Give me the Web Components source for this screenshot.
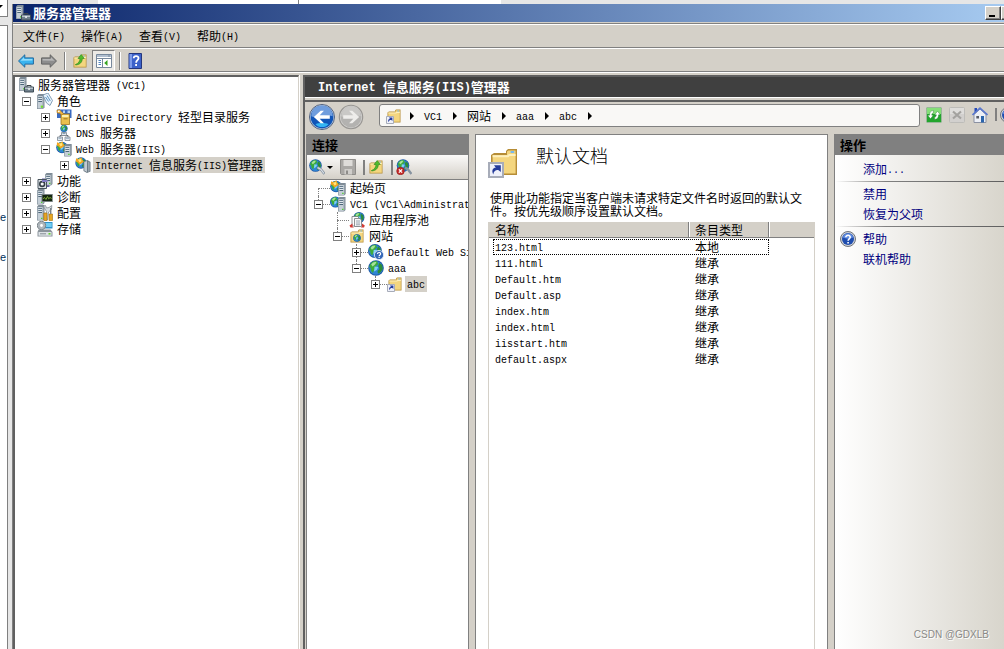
<!DOCTYPE html>
<html lang="zh-CN">
<head>
<meta charset="utf-8">
<title>服务器管理器</title>
<style>
html, body { height: 100%; margin: 0; }
body { overflow: hidden; background: #d4d0c8; color: #000;
  font: 12px/16px "Noto Sans CJK SC", "Noto Sans", sans-serif; }
</style>
</head>
<body>
<manager-desktop></manager-desktop>
<script>
// ASCII runs are set in a half-width monospaced face beside the full-width characters.
const mixed = s => s.replace(/[\x20-\x7e]+/g, m => `<span class="a">${m}</span>`);

const BASE = `
:host { display: block; box-sizing: border-box; }
* { box-sizing: border-box; }
.a { font-family: "Liberation Mono", monospace; font-size: 10px; line-height: 0; vertical-align: 1px; white-space: pre; }
button { font: inherit; color: inherit; background: none; border: 0; padding: 0; margin: 0; }
`;

function define(name, css, markup) {
  customElements.define(name, class extends HTMLElement {
    connectedCallback() {
      if (this.shadowRoot) return;
      const body = typeof markup === 'function' ? markup(this) : markup;
      this.attachShadow({ mode: 'open' }).innerHTML = `<style>${BASE}${css}</style>${body}`;
    }
  });
}

/* ---------- icon artwork, 16 x 16 units ---------- */
const tower = (x, y, h = 14) => `<g transform="translate(${x} ${y})">
  <path d="M0 1.5 1.5 0H7.5V${h - 1.5}L6 ${h}H0z" fill="#7f8c97"/>
  <path d="M.6 2H5.8V${h - .6}H.6z" fill="#c4ced6"/><path d="M5.8 2 7 .8V${h - 1.8}L5.8 ${h - .6}z" fill="#8f9ba5"/>
  <path d="M1.3 3.5H5M1.3 5.5H5M1.3 7.5H5" stroke="#4b6578" stroke-width="1"/>
  <path d="M1.3 4.3H5M1.3 6.3H5" stroke="#f5f8fa" stroke-width=".7"/>
  <path d="M4 ${h - 2.8}h1.4v1.4H4z" fill="#4fd12c"/></g>`;
const globe = (cx, cy, r) => `<g transform="translate(${cx} ${cy}) scale(${r / 8})">
  <circle r="8" fill="#1c58a6"/><circle r="7" fill="#2f86d5"/>
  <path d="M-6-3.5C-4-7-1-7.5 1-6.8L2.5-4 0-2 .5 0-2 2.2-3.2 5-5 3-5.5 0-7-1z" fill="#3cab3d"/>
  <path d="M3.5-5.5 6.2-3 7 1 4.5 4.5 2 5.8 1.5 3 3.5 1 2.3-2z" fill="#2c8d38"/>
  <path d="M-5-3.5C-3.5-6-1.5-6.5.5-6L-1-3.5-3.5-1.5z" fill="#a8e39b"/>
  <path d="M-1.5-1.5 2.3-1 .8 2-2 3.5z" fill="#7fd0f7"/></g>`;
const folder = `<path d="M1.5 4.5 3 3.5H9V2.5L10 1.5H14.5V14.5H1.5z" fill="#b68d37"/>
  <path d="M2.3 4.5H9.5V2.7L10.3 2.2H13.8V13.8H2.3z" fill="#f4d67f"/>
  <path d="M2.3 4.6H9.8L10.4 4H13.8V5H10.8L10.2 5.6H2.3z" fill="#fdf0bd"/><path d="M11.3 2.5h1.8v1h-1.8z" fill="#78b9ec"/>`;
const shortcut = `<path d="M.5 8.5H7.5V15.5H.5z" fill="#eff1fa" stroke="#a7acb9"/>
  <path d="M2.6 14.2C1.6 12 2.6 10.8 3.9 10.9L3 9.6H6.4V13L5.3 12.1C4.2 11.8 3 12.3 2.6 14.2z" fill="#243b9a"/>`;
const upArrow = `<path d="M3.5 11.5C6.5 10.5 8 8 8 5.5H6L9.2 1.5 12.3 5.5H10.3C10.3 9.5 7.5 11.8 3.5 12z" fill="#51bb2c" stroke="#27831a" stroke-width=".6"/>`;
const star = `<path d="M1 1.2 3.5 2.2 6.5.4 7.4 3 9 4.6 6.8 6.2 4.5 7.4 2.8 5.6.8 4.5z" fill="#f2a51f"/><path d="M3 2.7 6 2 6.5 4.2 4.6 5.5z" fill="#ffe77c"/>`;
const arrow = (a, b, c) => `<path d="M.5 8 6.8 1.8V4.9H15.4V11.1H6.8V14.2z" fill="${b}" stroke="${a}"/><path d="M2.5 7.7 6 4.3V6H14.4V7.5z" fill="${c}"/>`;

const ICONS = {
  manager: tower(1, 0, 14) + `<path d="M9 10V8.5H13V10" fill="none" stroke="#3f474d"/><path d="M6.5 10H15.5V15H6.5z" fill="#70808c" stroke="#3f4c56"/><path d="M7 10.5H15V12H7z" fill="#b7c3cc"/><path d="M10.2 11h1.7v2h-1.7z" fill="#e5eaed"/>`,
  roles: tower(0, 1, 15) + `<path d="M6 2 11 0 15.5 7.5 13 12.5 9.5 10z" fill="#e9f3fb" stroke="#6b8ca8" stroke-width=".8"/><path d="M8.5 4 11.5 8.5M10 2.5 13.3 8" stroke="#5c97c7"/><path d="M3.8 12.6h2.2v2H3.8z" fill="#73e02b"/>`,
  directory: `<path d="M1 .5H15.5V9H1z" fill="#3b6bc0"/><path d="M2 1.5h2.5V4H2zm5 0h2V4H7zm4.5 0H14V4h-2.5z" fill="#b4d2f4"/><path d="M5 5H13.5V15.5H5z" fill="#eabf4d" stroke="#9b7422" stroke-width=".8"/><path d="M6 6H12.5V8H6z" fill="#fff0ae"/><path d="M7.5 9.8H11.5" stroke="#9b7422"/><path d="M.8 1.5 3.5.5 5.5 2.8 7.5 4.5 6 6 3.5 4.3 1.2 4z" fill="#efb33f" stroke="#a66d13" stroke-width=".5"/><circle cx="2.8" cy="2.3" r=".9" fill="#fff"/>`,
  dns: globe(8, 3.5, 3.6) + `<path d="M8 7V11M4 12.5V10.5H12V12.5" fill="none" stroke="#626a70"/><path d="M5.5 7.5h5v3h-5zM1.5 12h5v3.5h-5zM9 12h5v3.5H9z" fill="#e4e9ee" stroke="#7c8790" stroke-width=".8"/><path d="M6.5 8.5h3M2.5 13.2h3M10 13.2h3" stroke="#88a4ba"/>`,
  web: globe(6, 6.5, 5.8) + star + tower(8.2, 3, 12.5),
  iis: globe(6, 6, 5.7) + star + `<path d="M8.5 4.5 12.5 3 15.5 5V14.5L12 16 8.5 14z" fill="#6d7b85"/><path d="M9.3 5 12 4.1V15L9.3 13.5z" fill="#c2cbd2"/><path d="M13 4.5 14.7 5.5V14L13 14.9z" fill="#98a4ad"/>`,
  features: `<path d="M5 7V5.5H12.5V14H9V7z" fill="#625da7"/>` + tower(8, 0, 12.5) + `<path d="M1 6.5H9.5V15.5H1z" fill="#dfe4e9" stroke="#47535c"/><circle cx="5.2" cy="11" r="3.2" fill="#353e46"/><circle cx="5.2" cy="11" r="1.6" fill="#f6f8fa"/><path d="M5 7H10.5V9H5z" fill="#827bc4"/>`,
  diag: tower(0, 0, 15.5) + `<path d="M4.5 5H15.8V13H4.5z" fill="#777f82"/><path d="M5.5 6H15V12H5.5z" fill="#14270f"/><path d="M6 9.8 7.5 8.5 9 10.5 10.5 7.5 11.7 9.8 13 8.5 14.7 9.5" stroke="#7aa537" fill="none"/>`,
  config: tower(0, 0, 15.5) + `<path d="M6.5 1.5 8.5.5 9.5 3 12 2.5 14.8.5 14.5 4.5 11.5 7 10.5 15H7.5L9.5 6.5z" fill="#d6dce1" stroke="#788087" stroke-width=".7"/><path d="M6.8 8H10V15.5H6.8zM12 9H15.5V15.5H12z" fill="#e8a622" stroke="#a36f0f" stroke-width=".6"/><path d="M13.7 3V9" stroke="#79828a" stroke-width="1.4"/>`,
  storage: `<path d="M6 1H15.5V7.5H6z" fill="#2f91c9"/><path d="M7 2H14.7V6H7z" fill="#71cdf2"/><circle cx="4.5" cy="4.5" r="4.2" fill="#afb6bb" stroke="#7c858b"/><circle cx="4.5" cy="4.5" r="1.4" fill="#fff"/><path d="M1.5 8.5H13.5L15.5 11V15.5H.5V11z" fill="#8b949b"/><path d="M1.5 11H14.5V14.7H1.5z" fill="#dde2e6"/><path d="M3 12.8H9" stroke="#838c92"/><path d="M11.5 12h2v1.6h-2z" fill="#61d22c"/>`,
  host: globe(5.5, 6, 5.5) + tower(8, 1, 14.5),
  pools: globe(10, 5.5, 5.5) + `<path d="M3 4.5H8.5L10.5 6.5V14H3z" fill="#fff" stroke="#74777b" stroke-width=".8"/><path d="M5.5 6.5H11L12.5 8V14.5H5.5z" fill="#f7f7f7" stroke="#74777b" stroke-width=".8"/><path d="M7 9H11M7 11H11M7 12.8H11" stroke="#7e8fa0" stroke-width=".8"/><path d="M.5 13.5 3.5 11.5V14.5L5 15.5H1.5zM15.8 13.5 13 11.5V14.5L11.8 15.5H15z" fill="#d23b35"/>`,
  sites: folder + globe(8, 10, 3.8),
  site: globe(8, 8, 7.8),
  siteq: globe(7, 7, 7) + `<circle cx="11" cy="11" r="4.6" fill="#3567b7" stroke="#e8f1fb" stroke-width=".8"/><path d="M9.5 9.9C9.5 8 12.7 8 12.6 9.9 12.6 11 11.1 11 11.1 12.2M11.1 13v1.1" fill="none" stroke="#fff" stroke-width="1.2"/>`,
  folder, upfolder: folder + upArrow, vdir: folder + shortcut,
  back: arrow('#20689f', '#3ab3ef', '#92dcfb'),
  forward: `<g transform="matrix(-1 0 0 1 16 0)">${arrow('#626262', '#8d8d8d', '#b7b7b7')}</g>`,
  panel: `<path d="M.5 1.5H15.5V14.5H.5z" fill="#fff" stroke="#77889c"/><path d="M1 2H15V4H1z" fill="#b1bfd0"/><path d="M12 3h2M1 5.5H15M6.5 5.5V14" stroke="#77889c"/><path d="M2.5 7.5H5M2.5 9.5H5M2.5 11.5H5" stroke="#4f82be"/><path d="M11.5 7V13L8.2 10z" fill="#36a31f"/>`,
  help: `<path d="M2 .5H14.5V15.5H2z" fill="#3c62ca" stroke="#24367d"/><path d="M2.5 1H5V15H2.5z" fill="#7d9be9"/><path d="M6.7 5.2C6.8 2.2 11.7 2.4 11.5 5.3 11.4 7.2 9.1 7.2 9.1 9.8M9.1 11V13" fill="none" stroke="#fff" stroke-width="1.8"/>`,
  helpround: `<circle cx="8" cy="8" r="7.5" fill="#d0d3d8" stroke="#71757c"/><circle cx="8" cy="8" r="6" fill="#1f4dae"/><path d="M2.7 6.5A5.5 5.5 0 0 1 13.3 6.5C10 8 6 8 2.7 6.5z" fill="#5f8be0"/><path d="M5.8 6.3C5.8 3.6 10.4 3.7 10.2 6.3 10.1 8 8.1 7.8 8.1 9.8M8.1 11v1.6" fill="none" stroke="#fff" stroke-width="1.6"/>`,
  connect: globe(6.5, 6.5, 6.3) + `<path d="M8.5 8.5 12 10.5 15.5 15" stroke="#8793a0" stroke-width="2.6" fill="none"/><path d="M8.5 8.5 12 10.5 15 14.5" stroke="#dae1e8" stroke-width="1.2" fill="none"/>`,
  disconnect: globe(7, 6.5, 6.3) + `<path d="M9 8.5 12 10.5 15.5 15" stroke="#8793a0" stroke-width="2.4" fill="none"/><circle cx="4.5" cy="12" r="3.8" fill="#c72c2a" stroke="#8b1717" stroke-width=".6"/><path d="M2.9 10.4 6.1 13.6M6.1 10.4 2.9 13.6" stroke="#fff" stroke-width="1.3"/>`,
  save: `<path d="M.5.5H15.5V15.5H1.5L.5 14.5z" fill="#aaa8a5" stroke="#8f8d8a"/><path d="M3.5 1H12.5V7H3.5z" fill="#dedcd9"/><path d="M4.5 10H12V15.5H4.5z" fill="#d0cecb"/><path d="M6 11.5h2V15H6z" fill="#8f8d8a"/>`,
  refresh: `<rect x=".5" y=".5" width="15" height="15" rx="1" fill="#23a52d" stroke="#9ab69b"/><path d="M1 1H15V7H1z" fill="#85df78"/><path d="M4.5 11.8 1.6 8.2H3.5C3.5 5 5 3.6 7.5 3.6V6C6.2 6 5.8 6.6 5.8 8.2H7.4z" fill="#fff" stroke="#23762a" stroke-width=".4"/><path d="M11.5 4.2 8.6 7.8H10.3C10.3 9.4 9.9 10 8.6 10V12.4C11 12.4 12.6 11 12.6 7.8H14.4z" fill="#fff" stroke="#23762a" stroke-width=".4"/>`,
  stop: `<rect x=".5" y=".5" width="15" height="15" rx="1" fill="#d2d0ce" stroke="#bdbcb9"/><path d="M1 1H15V7H1z" fill="#dedddb"/><path d="M4 4.5 12 11.5M12 4.5 4 11.5" stroke="#a3a29f" stroke-width="2.2"/>`,
  home: `<path d="M2 7.5 8 2 14 7.5V15.5H2z" fill="#eceff6" stroke="#8b91a2"/><path d="M2.5 1H5V4.5L2.5 6.5z" fill="#2449b8"/><path d="M.5 8 8 1.2 15.5 8" fill="none" stroke="#5877cf" stroke-width="1.6"/><path d="M9 9H12V15.5H9z" fill="#2b64ab"/><path d="M4.3 9H7V11.5H4.3z" fill="#565b66"/>`,
  navback: `<circle cx="8" cy="8" r="7.7" fill="#c5d4e6" stroke="#4c5e7c" stroke-width=".6"/><circle cx="8" cy="8" r="7" fill="#1155b7"/><path d="M1.4 7.5A6.6 6.6 0 0 1 14.6 7.5C11 5.7 5 9.5 1.4 7.5z" fill="#6f9ddd"/><path d="M4 12.4C6 14.8 10 14.8 12 12.4 9.7 11.5 6.3 11.5 4 12.4z" fill="#33b4f3"/><path d="M3 8 7.2 4.2H9.2L6.6 6.9H12.8V9.1H6.6L9.2 11.8H7.2z" fill="#fff"/>`,
  navforward: `<circle cx="8" cy="8" r="7.2" fill="#cfcecc" stroke="#989693" stroke-width=".7"/><circle cx="8" cy="8" r="6.4" fill="#b3b2b0"/><path d="M1.9 7.5A6.1 6.1 0 0 1 14.1 7.5C11 6 5 9 1.9 7.5z" fill="#c9c8c6"/><path d="M13 8 8.8 4.2H6.8L9.4 6.9H3.2V9.1H9.4L6.8 11.8H8.8z" fill="#eeedeb"/>`
};
define('ui-icon', `:host { flex: none; display: inline-block; width: 16px; height: 16px; }
  svg { display: block; width: 100%; height: 100%; }`,
  el => `<svg viewBox="0 0 16 16" aria-hidden="true">${ICONS[el.getAttribute('name')]}</svg>`);

/* ---------- tree row ---------- */
define('tree-node', `
  :host { height: 16px; }
  .row { display: flex; align-items: center; height: 16px; white-space: nowrap;
    padding-left: calc(var(--depth) * 19px + var(--inset, 0px)); }
  .cell { position: relative; flex: none; display: flex; align-items: center; width: var(--cell, 15px); height: 16px; }
  .cell.none { width: 0; }
  button { position: relative; width: 9px; height: 9px; border: 1px solid #808080; background: #fff; display: block; }
  button::before { content: ""; position: absolute; left: 1px; top: 3px; width: 5px; height: 1px; background: #000; }
  button.plus::after { content: ""; position: absolute; left: 3px; top: 1px; width: 1px; height: 5px; background: #000; }
  .lines::before { content: ""; position: absolute; left: 4px; top: 0; height: 8px; border-left: 1px dotted #808080; }
  .lines.full::before { height: 16px; }
  .lines.low::before { top: 8px; }
  .lines::after { content: ""; position: absolute; left: 4px; right: 0; top: 8px; border-top: 1px dotted #808080; }
  .lines button { z-index: 1; }
  .text { margin-left: 2px; padding: 0 2px; height: 16px; line-height: 16px; }
  .selected { background: #d4d0c8; }`,
  el => {
    const d = el.getAttribute('depth'), box = el.getAttribute('box'), line = el.getAttribute('line');
    const cell = box === 'none' ? 'cell none' : 'cell' + (line ? ' lines ' + line : '');
    const btn = box === 'plus' || box === 'minus' ? `<button class="${box}" aria-label="${box === 'plus' ? '展开' : '折叠'}"></button>` : '';
    return `<div class="row" role="treeitem" style="--depth:${d}"><span class="${cell}">${btn}</span>
      <ui-icon name="${el.getAttribute('icon')}"></ui-icon><span class="text${el.hasAttribute('selected') ? ' selected' : ''}">${mixed(el.getAttribute('label'))}</span></div>`;
  });
const nodes = rows => rows.map(([depth, box, icon, label, extra = '']) =>
  `<tree-node depth="${depth}" box="${box}" icon="${icon}" label="${label}" ${extra}></tree-node>`).join('');

/* ---------- window chrome ---------- */
define('title-bar', `
  :host { display: flex; align-items: center; height: 18px; padding-left: 2px; overflow: hidden;
    background: linear-gradient(90deg, #0a246a, #a6caf0); color: #fff; }
  h1 { margin: 0 0 0 2px; font-size: 13px; line-height: 18px; font-weight: 700; flex: 1; }
  .controls { display: flex; width: 19px; overflow: hidden; }
  button { flex: none; display: flex; align-items: flex-end; width: 16px; height: 14px; padding: 0 0 2px 3px; background: #d4d0c8;
    border: 1px solid; border-color: #fff #404040 #404040 #fff; box-shadow: inset -1px -1px #808080; }
  i { width: 6px; height: 2px; background: #000; }
  button + button { align-items: flex-start; padding: 2px 0 0 2px; }`,
  `<ui-icon name="manager"></ui-icon><h1>服务器管理器</h1>
   <div class="controls"><button aria-label="最小化"><i></i></button><button aria-label="最大化"></button></div>`);

define('menu-bar', `
  :host { display: flex; align-items: center; gap: 16px; height: 24px; padding-left: 10px;
    border-top: 1px solid #808080; box-shadow: inset 0 1px #fff; margin-top: 1px; }
  button { line-height: 22px; white-space: nowrap; }`,
  ['文件(F)', '操作(A)', '查看(V)', '帮助(H)'].map(t => `<button>${mixed(t)}</button>`).join(''));

define('tool-bar', `
  :host { display: flex; align-items: center; height: 24px; padding: 2px 0 0 5px;
    border-top: 1px solid #808080; box-shadow: inset 0 1px #fff; }
  button { display: block; height: 16px; margin-right: 7px; }
  i { width: 2px; height: 18px; border-left: 1px solid #808080; border-right: 1px solid #fff; margin-right: 6px; }
  .on { width: 23px; height: 22px; padding: 2px 3px; margin: 0 4px 0 -3px; border: 1px solid; border-color: #808080 #fff #fff #808080; background: #eceae6; }`,
  `<button aria-label="后退"><ui-icon name="back"></ui-icon></button><button aria-label="前进"><ui-icon name="forward"></ui-icon></button><i></i>
   <button aria-label="向上"><ui-icon name="upfolder"></ui-icon></button><button class="on" aria-label="显示树"><ui-icon name="panel"></ui-icon></button><i></i>
   <button aria-label="帮助"><ui-icon name="help"></ui-icon></button>`);

define('server-tree', `
  :host { background: #fff; border: solid; border-width: 2px 1px 0 2px; border-color: #606060 #d4d0c8 #606060 #606060;
    box-shadow: 1px 0 #fff; padding-left: 7px; overflow: hidden; }
  .root { margin-left: -4px; }`,
  `<div role="tree"><div class="root">${nodes([[0, 'none', 'manager', '服务器管理器 (VC1)']])}</div>${nodes([
    [0, 'minus', 'roles', '角色'],
    [1, 'plus', 'directory', 'Active Directory 轻型目录服务'],
    [1, 'plus', 'dns', 'DNS 服务器'],
    [1, 'minus', 'web', 'Web 服务器(IIS)'],
    [2, 'plus', 'iis', 'Internet 信息服务(IIS)管理器', 'selected'],
    [0, 'plus', 'features', '功能'],
    [0, 'plus', 'diag', '诊断'],
    [0, 'plus', 'config', '配置'],
    [0, 'plus', 'storage', '存储']])}</div>`);

/* ---------- IIS console ---------- */
define('address-bar', `
  :host { display: flex; align-items: center; height: 32px; padding: 0 0 3px 4px; overflow: hidden; }
  .round { display: block; flex: none; }
  .round ui-icon { width: 26px; height: 26px; display: block; }
  .travel { display: flex; gap: 3px; flex: none; width: 70px; }
  nav { flex: 1; display: flex; align-items: center; gap: 10px; height: 23px; margin-bottom: 2px; padding-left: 6px;
    background: #f9f8f6; border: 1px solid #808080; border-radius: 3px; white-space: nowrap; overflow: hidden; }
  nav button { line-height: 20px; padding-right: 1px; }
  nav ui-icon { margin-right: -2px; }
  nav i { border: solid transparent; border-width: 4px 0 4px 4px; border-left-color: #000; }
  .tools { flex: none; display: flex; align-items: center; gap: 7px; width: 84px; height: 16px; margin-bottom: 4px; padding-left: 6px; overflow: hidden; }
  .tools button { flex: none; }
  .tools ui-icon { display: block; }
  .tools s { flex: none; width: 2px; height: 13px; background: #808080; margin-right: -4px; }`,
  `<div class="travel"><button class="round" aria-label="后退"><ui-icon name="navback"></ui-icon></button><button class="round" aria-label="前进"><ui-icon name="navforward"></ui-icon></button></div>
   <nav><ui-icon name="vdir"></ui-icon><i></i>${['VC1', '网站', 'aaa', 'abc'].map(t => `<button>${mixed(t)}</button><i></i>`).join('')}</nav>
   <div class="tools"><button aria-label="刷新"><ui-icon name="refresh"></ui-icon></button><button aria-label="停止"><ui-icon name="stop"></ui-icon></button><button aria-label="主页"><ui-icon name="home"></ui-icon></button><s></s><button aria-label="帮助"><ui-icon name="helpround"></ui-icon></button></div>`);

define('connections-pane', `
  :host { display: flex; flex-direction: column; background: #fff; border-left: 1px solid #808080; border-right: 1px solid #808080; overflow: hidden; }
  h2 { margin: 0; height: 21px; padding-left: 5px; background: #808080; font-size: 13px; line-height: 21px; }
  .bar { display: flex; align-items: center; height: 25px; padding-left: 2px; border-bottom: 1px solid #808080;
    background: linear-gradient(#fbfaf9, #d4d0c8); }
  .bar button { display: block; flex: none; }
  .bar ui-icon { display: block; }
  .bar em { border: solid transparent; border-width: 3px 3px 0; border-top-color: #000; margin: 0 7px 0 2px; }
  .bar i { width: 2px; height: 15px; background: #808080; margin: 0 3px 0 7px; }
  [role=tree] { --inset: 7px; --cell: 16px; }`,
  `<h2>连接</h2><div class="bar"><button aria-label="连接"><ui-icon name="connect"></ui-icon></button><em></em><button aria-label="保存"><ui-icon name="save"></ui-icon></button><i></i><button aria-label="向上"><ui-icon name="upfolder"></ui-icon></button><i></i><button aria-label="断开"><ui-icon name="disconnect"></ui-icon></button></div>
   <div role="tree">${nodes([
    [0, 'blank', 'web', '起始页', 'line="low"'],
    [0, 'minus', 'host', 'VC1 (VC1\\Administrator)', 'line="up"'],
    [1, 'blank', 'pools', '应用程序池', 'line="full"'],
    [1, 'minus', 'sites', '网站', 'line="up"'],
    [2, 'plus', 'siteq', 'Default Web Site', 'line="full"'],
    [2, 'minus', 'site', 'aaa', 'line="up"'],
    [3, 'plus', 'vdir', 'abc', 'line="up" selected']])}</div>`);

define('document-list', `
  :host { flex: 1; border: solid #d4d0c8; border-width: 0 1px; }
  table { width: 100%; border-collapse: separate; border-spacing: 0; table-layout: fixed; }
  th { height: 16px; padding: 0 6px; line-height: 15px; font-weight: 400; text-align: left; background: #d4d0c8;
    border-bottom: 1px solid #808080; border-right: 1px solid #808080; box-shadow: inset 1px 0 #fff; }
  th:first-child { box-shadow: none; } th:last-child { border-right: 0; }
  td { height: 16px; padding: 0 6px; line-height: 16px; }
  .name { width: 200px; } .type { width: 80px; }
  tbody::before { content: ""; display: block; height: 1px; }
  .focus td:first-child { position: relative; }
  .focus td:first-child::before { content: ""; position: absolute; inset: 0 -80px 0 4px; border: 1px dotted #000; }`,
  `<table><thead><tr><th class="name">名称</th><th class="type">条目类型</th><th></th></tr></thead><tbody>${
    [['123.html', '本地'], ['111.html', '继承'], ['Default.htm', '继承'], ['Default.asp', '继承'], ['index.htm', '继承'], ['index.html', '继承'], ['iisstart.htm', '继承'], ['default.aspx', '继承']]
    .map(([n, t], i) => `<tr${i ? '' : ' class="focus"'}><td>${mixed(n)}</td><td>${t}</td><td></td></tr>`).join('')}</tbody></table>`);

define('document-pane', `
  :host { display: flex; flex-direction: column; background: #fff; border: 1px solid #808080; border-bottom: 0; padding: 0 12px; overflow: hidden; }
  header { display: flex; height: 56px; padding-top: 11px; gap: 16px; }
  header ui-icon { width: 32px; height: 32px; }
  h2 { margin: 0; font-size: 18px; line-height: 18px; font-weight: 300; }
  p { margin: 0 0 5px; padding: 0 10px 0 2px; line-height: 13px; }`,
  `<header><ui-icon name="vdir"></ui-icon><h2>默认文档</h2></header>
   <p>使用此功能指定当客户端未请求特定文件名时返回的默认文件。按优先级顺序设置默认文档。</p>
   <document-list></document-list>`);

define('actions-pane', `
  :host { border-left: 1px solid #808080; background: linear-gradient(90deg, #fff, #d8d5cc); overflow: hidden; }
  h2 { margin: 0 0 4px; height: 21px; padding-left: 5px; background: #808080; font-size: 13px; line-height: 21px; }
  .item { display: flex; align-items: center; height: 20px; padding-left: 28px; }
  .item.icon { padding-left: 5px; gap: 7px; }
  a { color: #00007f; text-decoration: none; white-space: nowrap; }
  hr { height: 1px; border: 0; margin: 2px 0; background: linear-gradient(90deg, transparent, #808080 30%, #606060); }`,
  `<h2>操作</h2><div class="item"><a href="#">${mixed('添加...')}</a></div><hr>
   <div class="item"><a href="#">禁用</a></div><div class="item"><a href="#">恢复为父项</a></div><hr>
   <div class="item icon"><ui-icon name="helpround"></ui-icon><a href="#">帮助</a></div><div class="item"><a href="#">联机帮助</a></div>`);

define('iis-console', `
  :host { display: flex; flex-direction: column; min-width: 0; border: solid #606060; border-width: 2px 0 0 2px; overflow: hidden; }
  h2 { margin: 0; height: 20px; padding-left: 13px; background: #404040; color: #fff; font-size: 13px; line-height: 20px; flex: none; }
  h2 .a { font-size: 12px; }
  .frame { flex: 1; min-height: 0; display: flex; flex-direction: column; border-top: 2px solid #606060; margin-top: 2px; }
  .rule { height: 1px; background: #fff; }
  address-bar { flex: none; }
  .panes { flex: 1; min-height: 0; display: grid; grid-template-columns: 163px minmax(0, 1fr) 170px; gap: 6px; padding-left: 1px; }`,
  `<h2>${mixed('Internet 信息服务(IIS)管理器')}</h2><div class="rule"></div>
   <div class="frame"><address-bar></address-bar>
   <div class="panes"><connections-pane></connections-pane><document-pane></document-pane><actions-pane></actions-pane></div></div>`);

define('manager-window', `
  :host { display: flex; flex-direction: column; min-width: 0; background: #d4d0c8; border-left: 1px solid #808080; }
  .work { flex: 1; min-height: 0; display: grid; grid-template-columns: 286px minmax(0, 1fr); gap: 4px;
    border-top: 1px solid #808080; box-shadow: inset 0 1px #fff; padding-top: 3px; }`,
  `<title-bar></title-bar><menu-bar></menu-bar><tool-bar></tool-bar>
   <div class="work"><server-tree></server-tree><iis-console></iis-console></div>`);

define('background-window', `
  :host { display: flex; flex-direction: column; width: 8px; background: #e6e6e6; overflow: hidden; font: 11px/14px "Liberation Sans", sans-serif; color: #00305a; }
  .box { height: 17px; background: #fff; border: solid #808080; border-width: 0 1px 1px 0; padding-top: 5px; }
  .box i { display: block; width: 3px; border: solid transparent; border-width: 3px 3px 0 0; border-top-color: #000; }
  .list { flex: 1; margin-top: 8px; background: #fff; border: solid #808080; border-width: 1px 1px 0 0; padding-top: 184px; }
  .list span { display: block; height: 40px; }`,
  `<div class="box"><i></i></div><div class="list"><span>e</span><span>e</span></div>`);

define('manager-desktop', `
  :host { position: relative; display: grid; grid-template-columns: 12px minmax(0, 1fr); height: 100vh; overflow: hidden; background: #e6e6e6; }
  .front { display: flex; flex-direction: column; min-height: 0; }
  .strip { height: 4px; background: linear-gradient(90deg, #e6e6e6 86px, #fff 86px 286px, #808080 286px 287px, #fff 287px 489px, #e6e6e6 489px); }
  manager-window { flex: 1; min-height: 0; }
  .mark { position: absolute; right: 15px; bottom: 6px; font: 10px/16px "Liberation Sans", sans-serif; color: #8a8a88; text-shadow: 1px 1px #fff; }`,
  `<background-window></background-window><div class="front"><div class="strip"></div><manager-window></manager-window></div><span class="mark">CSDN @GDXLB</span>`);
</script>
</body>
</html>
